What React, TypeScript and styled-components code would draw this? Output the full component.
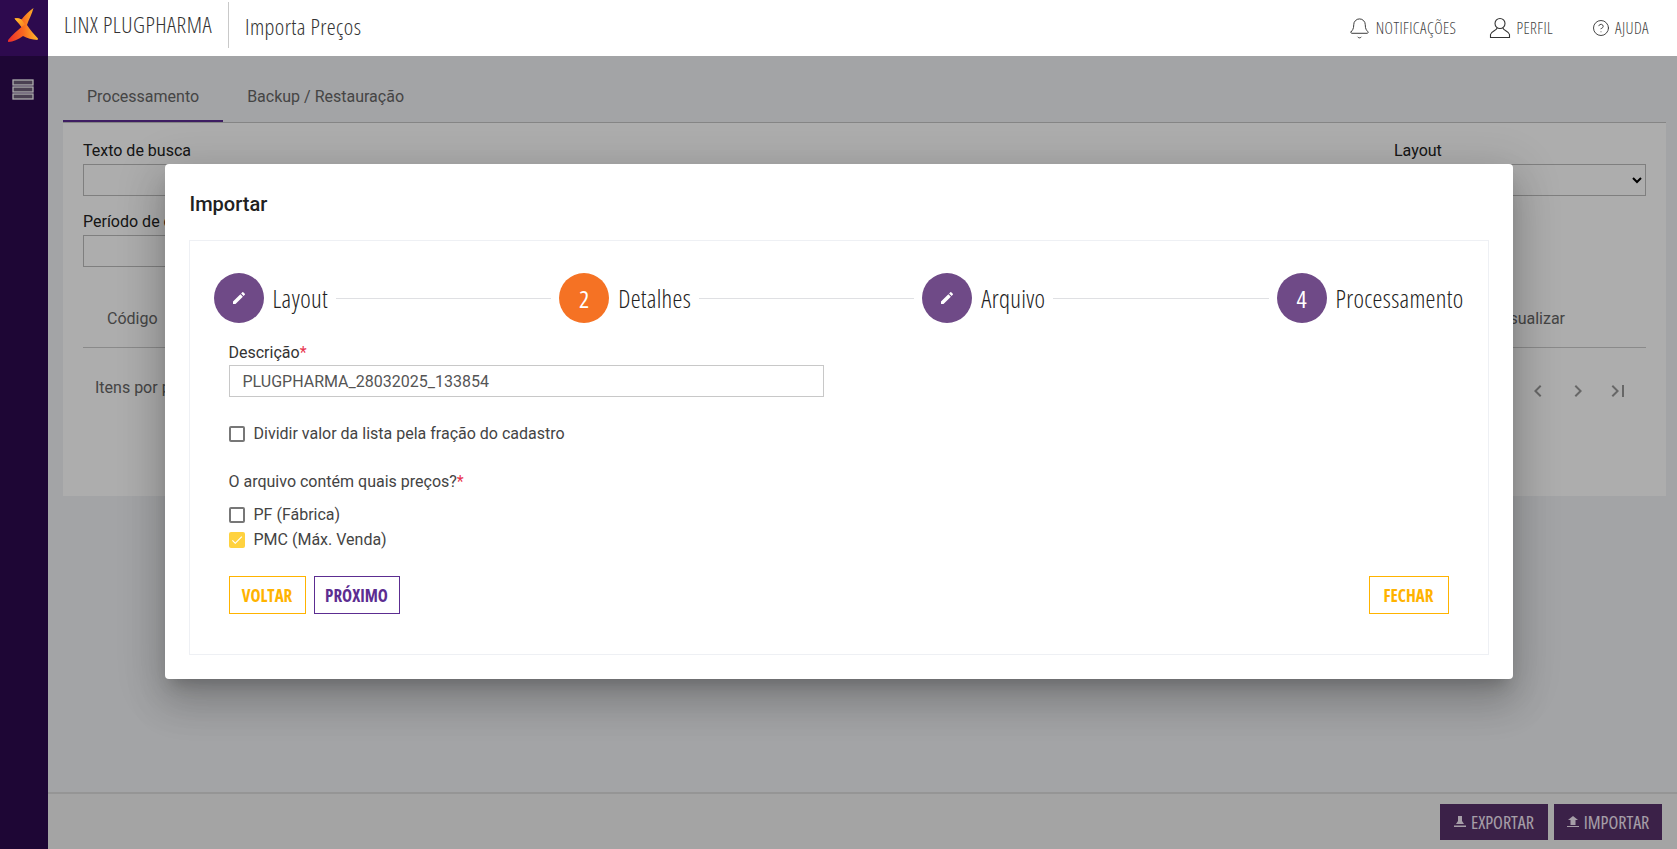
import React from "react";
import styled, { createGlobalStyle } from "styled-components";
import { MdEdit, MdCheck, MdChevronLeft, MdChevronRight, MdLastPage } from "react-icons/md";
import { Bell, CircleHelp } from "lucide-react";

const GlobalStyle = createGlobalStyle`
  html, body { margin: 0; height: 100%; }
  body { font-family: Roboto, "Liberation Sans", sans-serif; background: #f1f2f5; overflow: hidden; }
  * { box-sizing: border-box; }
`;

// the app's heading face is a condensed one, Open Sans at its narrow width is the nearest
const condensed = `
  font-family: "Open Sans", Roboto, sans-serif;
  font-stretch: 75%;
`;

const Logo = () => (
  <svg width="48" height="56" viewBox="0 0 48 56">
    <defs>
      <linearGradient id="lg" x1="0" y1="0.6" x2="1" y2="0.5">
        <stop offset="0" stopColor="#ee2f2c" />
        <stop offset="0.5" stopColor="#fa6a20" />
        <stop offset="1" stopColor="#fdc12a" />
      </linearGradient>
      <linearGradient id="lw" x1="0" y1="0" x2="1" y2="1">
        <stop offset="0" stopColor="#fdc62d" />
        <stop offset="1" stopColor="#fa7a20" />
      </linearGradient>
    </defs>
    <path
      d="M33.5 8 C32 14 28.5 20 27 25 C30 30 34 34 38 38.5 L37.5 40 C32 39.5 27 38.5 23 36 C18 39.5 13 42 8.5 42 C7.5 41.5 8 40.5 8.5 39.5 C12 35 17 31 21.5 27 C19.5 24 17 21.5 14.5 18.5 C17 18 19.5 18.5 21.5 19.5 C25 15 29 11 33.5 8 Z"
      fill="url(#lg)"
    />
    <path d="M14.5 18.5 C17 18 19.5 18.5 21.5 19.5 L25 24.5 L21.5 27 C19.5 24 17 21.5 14.5 18.5 Z" fill="url(#lw)" />
  </svg>
);

const MenuIcon = () => (
  <svg width="22" height="21" viewBox="0 0 22 21">
    <g fill="#6d5f7a" stroke="#fff" strokeWidth="1.3">
      <rect x="1" y="1" width="20" height="5" />
      <rect x="1" y="8" width="20" height="5" />
      <rect x="1" y="15" width="20" height="5" />
    </g>
  </svg>
);

const PersonIcon = () => (
  <svg width="22" height="22" viewBox="0 0 22 22" fill="none" stroke="#333" strokeWidth="1.1">
    <circle cx="11" cy="6.5" r="5" />
    <path d="M8 11 C8 13.5 2 14 1.5 17.5 V20.5 H20.5 V17.5 C20 14 14 13.5 14 11" />
  </svg>
);

const TrayIcon: React.FC<{ up?: boolean }> = ({ up }) => (
  <svg width="12" height="11" viewBox="0 0 12 11">
    {up ? (
      <path d="M6 0 L11 4 H8.5 V9 H3.5 V4 H1 Z M0 10 H12 V11 H0 Z" fill="#f5e9f8" />
    ) : (
      <path d="M4 0 H8 V5 L10 8 H2 L4 5 Z M0 9.6 H12 V11 H0 Z" fill="#f5e9f8" />
    )}
  </svg>
);

const Step: React.FC<{ label: string; number?: number; active?: boolean }> = ({ label, number, active }) => (
  <StepItem>
    <StepCircle $active={active}>{number ?? <MdEdit size={16} />}</StepCircle>
    <StepLabel>{label}</StepLabel>
  </StepItem>
);

const CheckRow: React.FC<{ label: string; checked?: boolean; spaced?: boolean }> = ({ label, checked, spaced }) => (
  <CheckLine $spaced={spaced}>
    <CheckBox $checked={checked}>{checked && <MdCheck size={14} color="#fff" />}</CheckBox>
    {label}
  </CheckLine>
);

export default function App() {
  return (
    <Page>
      <GlobalStyle />
      <Sidebar>
        <LogoBox>
          <Logo />
        </LogoBox>
        <MenuBox>
          <MenuIcon />
        </MenuBox>
      </Sidebar>
      <Main>
        <Header>
          <Brand>LINX PLUGPHARMA</Brand>
          <PageName>Importa Preços</PageName>
          <Nav>
            <NavItem>
              <Bell size={23} strokeWidth={1} />
              NOTIFICAÇÕES
            </NavItem>
            <NavItem>
              <PersonIcon />
              PERFIL
            </NavItem>
            <NavItem>
              <CircleHelp size={18} strokeWidth={1.2} />
              AJUDA
            </NavItem>
          </Nav>
        </Header>
        <Content>
          <Tabs>
            <Tab $active>Processamento</Tab>
            <Tab>Backup / Restauração</Tab>
          </Tabs>
          <Panel>
            <FormGrid>
              <Field>
                <FieldLabel>Texto de busca</FieldLabel>
                <FieldInput />
              </Field>
              <Field>
                <FieldLabel>Layout</FieldLabel>
                <FieldSelect>
                  <option></option>
                </FieldSelect>
              </Field>
              <Field>
                <FieldLabel>Período de criação</FieldLabel>
                <FieldInput />
              </Field>
            </FormGrid>
            <TableHead>
              <span>Código</span>
              <span>Visualizar</span>
            </TableHead>
            <Paging>
              <span>Itens por página</span>
              <PageButtons>
                <MdChevronLeft size={24} />
                <MdChevronRight size={24} />
                <MdLastPage size={24} />
              </PageButtons>
            </Paging>
          </Panel>
        </Content>
        <Footer>
          <FooterButton>
            <TrayIcon />
            EXPORTAR
          </FooterButton>
          <FooterButton>
            <TrayIcon up />
            IMPORTAR
          </FooterButton>
        </Footer>
      </Main>
      <Overlay>
        <Modal>
          <ModalTitle>Importar</ModalTitle>
          <ModalCard>
            <Stepper>
              <Step label="Layout" />
              <StepLine />
              <Step label="Detalhes" number={2} active />
              <StepLine />
              <Step label="Arquivo" />
              <StepLine />
              <Step label="Processamento" number={4} />
            </Stepper>
            <FormBody>
              <DescLabel>
                Descrição<Req>*</Req>
              </DescLabel>
              <DescInput defaultValue="PLUGPHARMA_28032025_133854" />
              <CheckRow label="Dividir valor da lista pela fração do cadastro" spaced />
              <Question>
                O arquivo contém quais preços?<Req>*</Req>
              </Question>
              <CheckRow label="PF (Fábrica)" />
              <CheckRow label="PMC (Máx. Venda)" checked />
              <Actions>
                <ActionButton $color="#ffb300" $width={77}>
                  VOLTAR
                </ActionButton>
                <ActionButton $color="#5c2d91" $width={86}>
                  PRÓXIMO
                </ActionButton>
                <ActionButton $color="#ffb300" $width={80} $push>
                  FECHAR
                </ActionButton>
              </Actions>
            </FormBody>
          </ModalCard>
        </Modal>
      </Overlay>
    </Page>
  );
}

const Page = styled.div`
  display: flex;
  height: 100vh;
  position: relative;
`;

const Sidebar = styled.div`
  width: 48px;
  flex-shrink: 0;
  background: #2d0a4e;
`;

const LogoBox = styled.div`
  height: 58px;
`;

const MenuBox = styled.div`
  display: flex;
  justify-content: center;
  padding: 21px 3px 0 0;
`;

const Main = styled.div`
  flex: 1;
  min-width: 0;
  display: flex;
  flex-direction: column;
`;

const Header = styled.div`
  height: 56px;
  background: #fff;
  display: flex;
  align-items: center;
  padding-left: 16px;
  ${condensed}
  font-weight: 300;
  color: #333;
`;

const Brand = styled.div`
  font-size: 22.5px;
  letter-spacing: 0.5px;
  height: 46px;
  margin-top: -6px;
  line-height: 46px;
  padding-right: 16px;
  border-right: 1px solid #c9c9c9;
`;

const PageName = styled.div`
  font-size: 22.5px;
  letter-spacing: 0.4px;
  margin-left: 16px;
  margin-top: -3px;
`;

const Nav = styled.div`
  margin-left: auto;
  display: flex;
  align-items: center;
  gap: 33px;
  padding-right: 28px;
`;

const NavItem = styled.div`
  display: flex;
  align-items: center;
  gap: 5px;
  font-size: 16px;
  letter-spacing: 0.4px;
  color: #444;
  svg {
    color: #333;
  }
  &:last-child {
    margin-left: 6px;
  }
`;

const Content = styled.div`
  flex: 1;
  padding: 16px 11px 0 15px;
`;

const Tabs = styled.div`
  display: flex;
  height: 50px;
`;

const Tab = styled.div<{ $active?: boolean }>`
  padding: 0 24px;
  font-size: 16px;
  line-height: 50px;
  color: #666;
  border-bottom: 2px solid ${(p) => (p.$active ? "#5c2d91" : "transparent")};
`;

const Panel = styled.div`
  height: 374px;
  background: #fff;
  border-top: 1px solid #c4c4c4;
  padding: 18px 20px 0;
`;

const FormGrid = styled.div`
  display: grid;
  grid-template-columns: 1fr 252px;
  column-gap: 20px;
  row-gap: 16px;
`;

const Field = styled.div`
  display: flex;
  flex-direction: column;
`;

const FieldLabel = styled.label`
  font-size: 16px;
  line-height: 19px;
  color: #222;
  margin-bottom: 4px;
`;

const FieldInput = styled.input`
  height: 32px;
  border: 1px solid #bbb;
  background: #fff;
`;

const FieldSelect = styled.select`
  height: 32px;
  border: 1px solid #bbb;
  background: #fff;
`;

const TableHead = styled.div`
  display: flex;
  justify-content: space-between;
  align-items: center;
  height: 75px;
  padding: 17px 81px 0 24px;
  margin-top: 6px;
  border-bottom: 1px solid #ccc;
  font-size: 16px;
  color: #666;
`;

const Paging = styled.div`
  display: flex;
  justify-content: space-between;
  align-items: center;
  height: 78px;
  padding: 0 16px 0 12px;
  font-size: 16px;
  color: #666;
`;

const PageButtons = styled.div`
  display: flex;
  gap: 16px;
  margin-top: 8px;
  color: #999;
`;

const Footer = styled.div`
  height: 57px;
  background: #f2f2f2;
  border-top: 2px solid #dcdcdc;
  display: flex;
  justify-content: flex-end;
  align-items: center;
  gap: 6px;
  padding-right: 15px;
`;

const FooterButton = styled.div`
  width: 108px;
  height: 36px;
  background: #58326a;
  display: flex;
  align-items: center;
  justify-content: center;
  gap: 5px;
  ${condensed}
  font-size: 18px;
  color: #f5e9f8;
`;

const Overlay = styled.div`
  position: absolute;
  inset: 56px 0 0 0;
  background: rgba(0, 0, 0, 0.32);
  padding-top: 108px;
`;

const Modal = styled.div`
  width: 1348px;
  height: 515px;
  margin: 0 auto;
  background: #fff;
  border-radius: 4px;
  padding: 24px;
  box-shadow: 0 11px 15px -7px rgba(0, 0, 0, 0.2), 0 24px 38px 3px rgba(0, 0, 0, 0.14),
    0 9px 46px 8px rgba(0, 0, 0, 0.12);
`;

const ModalTitle = styled.h2`
  margin: 2px 0 22px 1px;
  font-size: 20px;
  line-height: 28px;
  font-weight: 500;
  color: #212121;
`;

const ModalCard = styled.div`
  height: 415px;
  border: 1px solid #eef0f4;
  padding: 32px 24px 0;
`;

const Stepper = styled.div`
  display: flex;
  align-items: center;
  height: 50px;
`;

const StepItem = styled.div`
  display: flex;
  align-items: center;
  gap: 9px;
`;

const StepCircle = styled.div<{ $active?: boolean }>`
  width: 50px;
  height: 50px;
  border-radius: 50%;
  background: ${(p) => (p.$active ? "#f57224" : "#6f4a87")};
  color: #fff;
  display: flex;
  align-items: center;
  justify-content: center;
  ${condensed}
  font-size: 24px;
  font-weight: 500;
`;

const StepLabel = styled.div`
  ${condensed}
  font-size: 25px;
  letter-spacing: 0.3px;
  font-weight: 300;
  color: #222;
`;

const StepLine = styled.div`
  flex: 1;
  height: 1px;
  background: #dfe0e3;
  margin: 0 8px;
`;

const FormBody = styled.div`
  padding: 20px 15px 0;
`;

const DescLabel = styled.label`
  display: block;
  font-size: 16px;
  line-height: 19px;
  color: #333;
  margin-bottom: 3px;
`;

const Req = styled.span`
  color: #e8344e;
`;

const DescInput = styled.input`
  display: block;
  width: 595px;
  height: 32px;
  padding: 0 13px;
  border: 1px solid #c8c8c8;
  font-family: inherit;
  font-size: 16px;
  color: #555;
  outline: none;
`;

const CheckLine = styled.div<{ $spaced?: boolean }>`
  display: flex;
  align-items: center;
  gap: 9px;
  height: 25px;
  margin-top: ${(p) => (p.$spaced ? "24px" : "0")};
  font-size: 16px;
  color: #444;
`;

const CheckBox = styled.span<{ $checked?: boolean }>`
  width: 16px;
  height: 16px;
  border-radius: 2px;
  display: flex;
  align-items: center;
  justify-content: center;
  background: ${(p) => (p.$checked ? "#ffd23f" : "#fff")};
  border: ${(p) => (p.$checked ? "none" : "2px solid #777")};
`;

const Question = styled.div`
  margin: 26px 0 11px;
  font-size: 16px;
  line-height: 19px;
  color: #444;
`;

const Actions = styled.div`
  display: flex;
  gap: 8px;
  margin-top: 24px;
`;

const ActionButton = styled.div<{ $color: string; $width: number; $push?: boolean }>`
  width: ${(p) => p.$width}px;
  height: 38px;
  display: flex;
  align-items: center;
  justify-content: center;
  border: 1px solid ${(p) => p.$color};
  color: ${(p) => p.$color};
  ${condensed}
  font-size: 17px;
  font-weight: 700;
  margin-left: ${(p) => (p.$push ? "auto" : "0")};
`;
